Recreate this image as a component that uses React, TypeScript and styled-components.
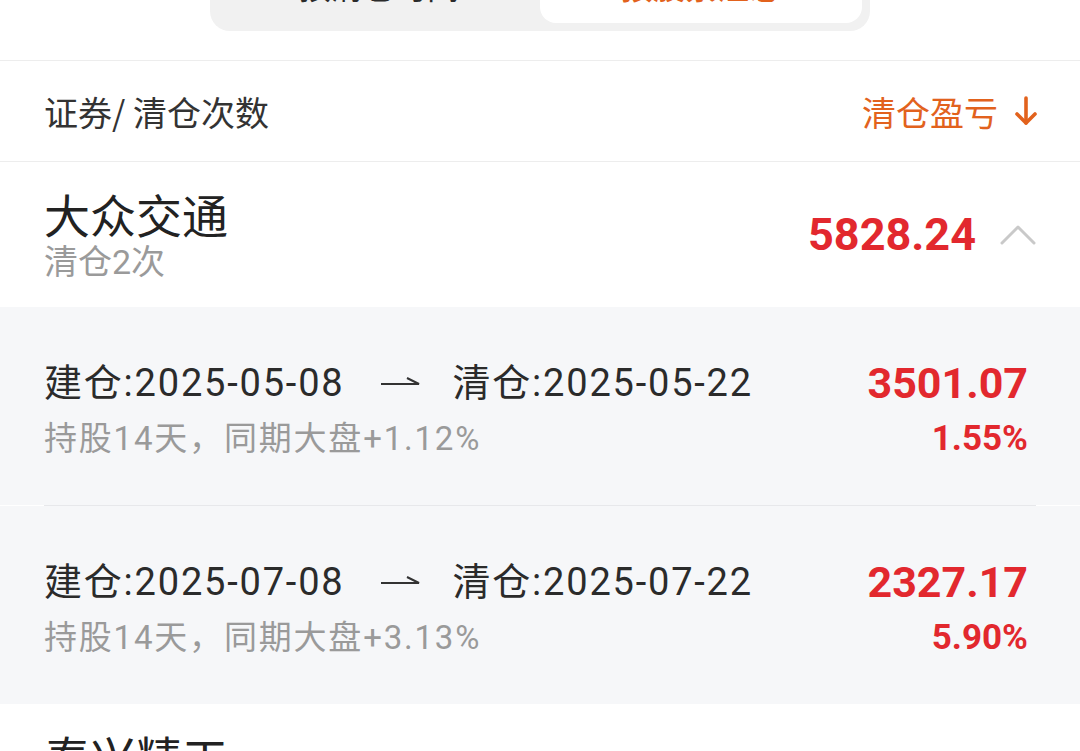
import styled, { createGlobalStyle } from 'styled-components'

const GlobalStyle = createGlobalStyle`
	html, body {
		margin: 0;
		padding: 0;
		background: #ffffff;
		overflow: hidden;
	}
	body {
		font-family: 'Noto Sans CJK SC', 'Noto Sans', sans-serif;
		color: #2b2b2b;
	}
`

const RED = '#e2282e'
const ORANGE = '#e2621d'
const MIXED = "Roboto, 'Noto Sans CJK SC', sans-serif"

type Trade = { open: string; close: string; days: number; market: string; profit: string; rate: string }
type Stock = { name: string; times: number; total: string; trades: Trade[] }

const stocks: Stock[] = [
	{
		name: '大众交通',
		times: 2,
		total: '5828.24',
		trades: [
			{ open: '2025-05-08', close: '2025-05-22', days: 14, market: '+1.12%', profit: '3501.07', rate: '1.55%' },
			{ open: '2025-07-08', close: '2025-07-22', days: 14, market: '+3.13%', profit: '2327.17', rate: '5.90%' },
		],
	},
	{ name: '泰兴精工', times: 1, total: '1203.50', trades: [] },
]

function App() {
	return (
		<Page>
			<GlobalStyle />
			<TabBar>
				<Tab>按清仓时间</Tab>
				<Tab $active>按股票汇总</Tab>
			</TabBar>
			<Header>
				<span>证券/ 清仓次数</span>
				<SortButton>
					清仓盈亏
					<svg width='24' height='32' viewBox='0 0 24 32' fill='none' stroke={ORANGE} strokeWidth='3.6' strokeLinecap='round' strokeLinejoin='round'>
						<path d='M12 3v25' />
						<path d='M3 19l9 9 9-9' />
					</svg>
				</SortButton>
			</Header>
			{stocks.map((s) => (
				<div key={s.name}>
					<StockRow>
						<div>
							<StockName>{s.name}</StockName>
							<SubText>清仓{s.times}次</SubText>
						</div>
						<TotalBox>
							<Total>{s.total}</Total>
							<svg width='36' height='22' viewBox='0 0 36 22' fill='none' stroke='#c9c9c9' strokeWidth='3' strokeLinecap='round' strokeLinejoin='round'>
								<path d='M2 19L18 3l16 16' />
							</svg>
						</TotalBox>
					</StockRow>
					{s.trades.map((t, i) => (
						<div key={t.open}>
							{i > 0 && <Divider />}
							<TradeRow>
								<div>
									<TradeDates>
										建仓:{t.open}
										<Arrow width='40' height='12' viewBox='0 0 40 12' fill='none' stroke='#333' strokeWidth='2'>
											<path d='M1 9h38L27 3' />
										</Arrow>
										清仓:{t.close}
									</TradeDates>
									<TradeInfo>
										持股{t.days}天，同期大盘{t.market}
									</TradeInfo>
								</div>
								<TradeNumbers>
									<Profit>{t.profit}</Profit>
									<Rate>{t.rate}</Rate>
								</TradeNumbers>
							</TradeRow>
						</div>
					))}
				</div>
			))}
		</Page>
	)
}

const Page = styled.div`
	width: 1080px;
	height: 751px;
	overflow: hidden;
	background: #fff;
`

const TabBar = styled.div`
	display: flex;
	width: 660px;
	height: 80px;
	box-sizing: border-box;
	margin: -49px auto 29px;
	padding: 8px;
	background: #f1f1f1;
	border-radius: 20px;
`

const Tab = styled.div<{ $active?: boolean }>`
	flex: 1;
	display: flex;
	align-items: center;
	justify-content: center;
	padding-bottom: 13px;
	font-size: 32px;
	font-weight: ${(p) => (p.$active ? 700 : 400)};
	color: ${(p) => (p.$active ? ORANGE : '#2b2b2b')};
	background: ${(p) => (p.$active ? '#fff' : 'transparent')};
	border-radius: 16px;
`

const Header = styled.div`
	display: flex;
	align-items: center;
	justify-content: space-between;
	height: 100px;
	padding: 0 42px 0 44px;
	border-top: 1px solid #ededed;
	border-bottom: 1px solid #ededed;
	font-size: 34px;
	color: #333;
`

const SortButton = styled.div`
	display: flex;
	align-items: center;
	gap: 16px;
	color: ${ORANGE};
`

const StockRow = styled.div`
	display: flex;
	align-items: center;
	justify-content: space-between;
	height: 145px;
	padding: 0 44px;
`

const StockName = styled.div`
	font-size: 46px;
	line-height: 54px;
	color: #222;
`

const SubText = styled.div`
	font-family: ${MIXED};
	font-size: 34px;
	line-height: 44px;
	color: #9a9a9a;
`

const TotalBox = styled.div`
	display: flex;
	align-items: center;
	gap: 24px;
`

const Total = styled.div`
	font-family: Roboto, 'Noto Sans', sans-serif;
	font-weight: 700;
	font-size: 45px;
	color: ${RED};
`

const TradeRow = styled.div`
	display: flex;
	align-items: center;
	justify-content: space-between;
	box-sizing: border-box;
	height: 198px;
	padding: 8px 52px 0 44px;
	background: #f6f7f9;
`

const Divider = styled.div`
	height: 1px;
	background: #fff;

	&::after {
		content: '';
		display: block;
		height: 1px;
		margin: 0 44px;
		background: #e7e8eb;
	}
`

const TradeDates = styled.div`
	display: flex;
	align-items: center;
	font-family: ${MIXED};
	font-size: 38px;
	letter-spacing: 1.8px;
	line-height: 52px;
	color: #2b2b2b;
	white-space: nowrap;
`

const Arrow = styled.svg`
	margin: 0 32px 4px 36px;
`

const TradeInfo = styled.div`
	margin-top: 6px;
	font-family: ${MIXED};
	font-size: 33px;
	letter-spacing: 1.8px;
	line-height: 48px;
	color: #9a9a9a;
`

const TradeNumbers = styled.div`
	display: flex;
	flex-direction: column;
	align-items: flex-end;
	font-family: Roboto, 'Noto Sans', sans-serif;
	font-weight: 700;
	color: ${RED};
`

const Profit = styled.div`
	font-size: 43px;
	line-height: 52px;
`

const Rate = styled.div`
	margin-top: 6px;
	font-size: 35px;
	line-height: 48px;
`

export default App
